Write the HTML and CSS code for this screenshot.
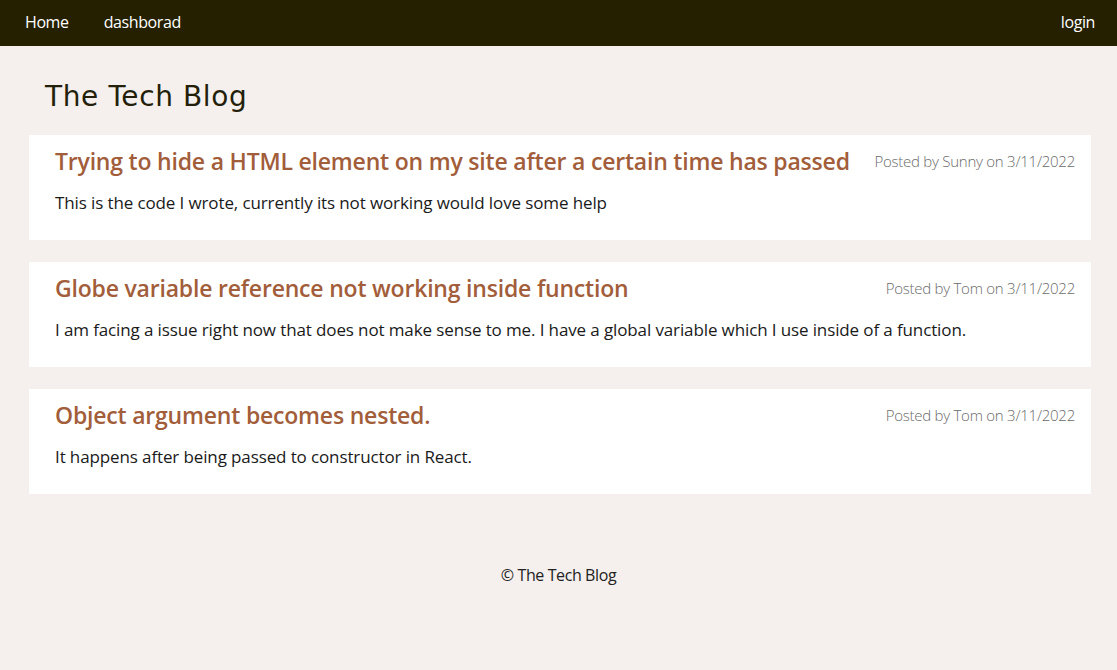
FILE: index.html
```html
<!DOCTYPE html>
<html lang="en">
<head>
<meta charset="utf-8">
<title>The Tech Blog</title>
<link rel="stylesheet" href="styles.css">
</head>
<body>
<nav class="topnav">
  <div class="nav-left">
    <a class="nav-link" href="#">Home</a>
    <a class="nav-link" href="#">dashborad</a>
  </div>
  <a class="nav-link" href="#">login</a>
</nav>
<main class="main">
  <h1 class="site-title">The Tech Blog</h1>
  <section class="posts">
    <article class="post">
      <div class="post-head">
        <h2 class="post-title">Trying to hide a HTML element on my site after a certain time has passed</h2>
        <span class="post-meta">Posted by Sunny on 3/11/2022</span>
      </div>
      <p class="post-body">This is the code I wrote, currently its not working would love some help</p>
    </article>
    <article class="post">
      <div class="post-head">
        <h2 class="post-title">Globe variable reference not working inside function</h2>
        <span class="post-meta">Posted by Tom on 3/11/2022</span>
      </div>
      <p class="post-body">I am facing a issue right now that does not make sense to me. I have a global variable which I use inside of a function.</p>
    </article>
    <article class="post">
      <div class="post-head">
        <h2 class="post-title">Object argument becomes nested.</h2>
        <span class="post-meta">Posted by Tom on 3/11/2022</span>
      </div>
      <p class="post-body">It happens after being passed to constructor in React.</p>
    </article>
  </section>
</main>
<footer class="footer">© The Tech Blog</footer>
</body>
</html>
```
FILE: styles.css
```css
* { box-sizing: border-box; }
html, body { margin: 0; padding: 0; }
body {
  background: #f5f0ed;
  font-family: "Open Sans", "Noto Sans", sans-serif;
  color: #1a1a1a;
  width: 1117px;
  height: 670px;
  overflow: hidden;
}
.topnav {
  height: 46px;
  background: #252000;
  display: flex;
  align-items: center;
  justify-content: space-between;
  padding: 0 22px 0 25px;
}
.nav-left { display: flex; gap: 35px; }
.nav-link {
  color: #ffffff;
  text-decoration: none;
  font-size: 16px;
  letter-spacing: -0.4px;
  margin-top: -2px;
}
.main { padding: 0 26px 0 29px; }
.site-title {
  margin: 0;
  padding: 31px 0 18px 16px;
  font-family: "DejaVu Sans", sans-serif;
  font-weight: normal;
  font-size: 28px;
  line-height: 40px;
  color: #241f0a;
  letter-spacing: 0.6px;
}
.posts { display: flex; flex-direction: column; gap: 22px; }
.post {
  background: #ffffff;
  height: 105px;
  padding: 10px 16px 0 26px;
}
.post-head {
  display: flex;
  justify-content: space-between;
  align-items: center;
  gap: 16px;
}
.post-title {
  margin: 0;
  font-size: 23px;
  font-weight: 600;
  line-height: 32px;
  color: #a25d3a;
  letter-spacing: -0.2px;
}
.post-meta {
  font-size: 15px;
  font-weight: 300;
  color: #6b6b6b;
  letter-spacing: -0.25px;
  white-space: nowrap;
}
.post-body {
  margin: 14px 0 0 0;
  font-size: 17px;
  line-height: 24px;
  color: #1a1a1a;
  letter-spacing: -0.12px;
}
.footer {
  text-align: center;
  padding-top: 70px;
  font-size: 16px;
  color: #222;
  letter-spacing: -0.4px;
}
```
